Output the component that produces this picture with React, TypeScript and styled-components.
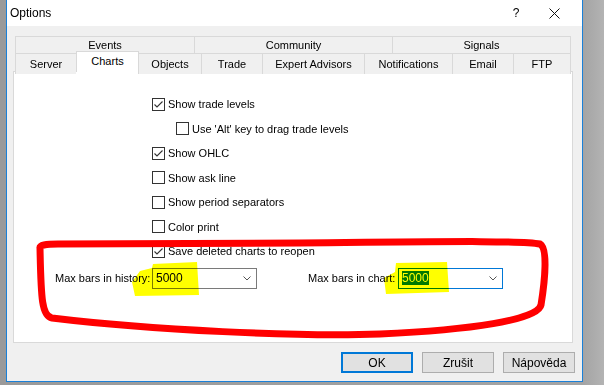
import React from 'react';
import styled, { createGlobalStyle } from 'styled-components';

const GlobalStyle = createGlobalStyle`
  html, body {
    margin: 0;
    padding: 0;
    background: #a6a6a6;
  }
  * {
    box-sizing: border-box;
  }
`;

const Screen = styled.div`
  position: relative;
  width: 604px;
  height: 385px;
  overflow: hidden;
  display: flex;
  padding-left: 6px;
  background: linear-gradient(90deg, #9a9a9a 0px, #9a9a9a 6px, #a4a4a4 583px, #b3b3b3 604px);
  font-family: 'Liberation Sans', Arial, sans-serif;
  font-size: 11px;
  color: #000;
`;

const Window = styled.div`
  width: 577px;
  height: 382px;
  border: 1px solid #1a80d8;
  border-top: none;
  background: #f0f0f0;
  display: flex;
  flex-direction: column;
`;

const TitleBar = styled.div`
  height: 26px;
  background: #fff;
  display: flex;
  align-items: center;
  padding-left: 3px;
  padding-right: 5px;
`;

const Title = styled.div`
  flex: 1;
  font-size: 12px;
`;

const TitleButton = styled.div<{ $w: number }>`
  width: ${(p) => p.$w}px;
  height: 26px;
  display: flex;
  align-items: center;
  justify-content: center;
  font-size: 12px;
`;

const Body = styled.div`
  flex: 1;
  display: flex;
  flex-direction: column;
  padding: 10px 9px 8px 6px;
`;

const Tabs = styled.div`
  margin: 0 2px;
`;

const TabRow = styled.div<{ $cols: string; $h: number }>`
  display: grid;
  grid-template-columns: ${(p) => p.$cols};
  height: ${(p) => p.$h}px;
`;

const Tab = styled.div<{ $active?: boolean; $last?: boolean }>`
  position: relative;
  display: flex;
  align-items: center;
  justify-content: center;
  border-top: 1px solid #d9d9d9;
  border-left: 1px solid #d9d9d9;
  border-right: ${(p) => (p.$last ? '1px solid #d9d9d9' : 'none')};
  background: ${(p) => (p.$active ? '#fff' : '#f0f0f0')};
  ${(p) =>
    p.$active
      ? `
    top: -2px;
    height: 21px;
    border-right: 1px solid #d9d9d9;
    margin-right: -1px;
    padding-bottom: 3px;
    z-index: 2;
  `
      : ''}
`;

const Panel = styled.div`
  height: 272px;
  border: 1px solid #d9d9d9;
  background: #fff;
  padding: 20px 0 0 138px;
  display: flex;
  flex-direction: column;
`;

const CheckRow = styled.div<{ $indent?: boolean }>`
  height: 24.5px;
  display: flex;
  align-items: center;
  gap: 3px;
  margin-left: ${(p) => (p.$indent ? 24 : 0)}px;
`;

const Box = styled.div`
  width: 13px;
  height: 13px;
  border: 1px solid #333;
  background: #fff;
  display: flex;
`;

const FieldsRow = styled.div`
  display: flex;
  align-items: center;
  margin: 4px 0 0 -97px;
  gap: 51px;
`;

const Field = styled.div`
  display: flex;
  align-items: center;
`;

const FieldLabel = styled.div<{ $w: number }>`
  width: ${(p) => p.$w}px;
  text-align: right;
  margin-right: 4px;
  white-space: nowrap;
`;

const Combo = styled.div<{ $focused?: boolean }>`
  width: 105px;
  height: 21px;
  border: 1px solid ${(p) => (p.$focused ? '#0078d7' : '#7a7a7a')};
  background: #fff;
  display: flex;
  align-items: center;
  padding: 0 5px 0 3px;
  font-size: 12px;
`;

const ComboValue = styled.span<{ $selected?: boolean }>`
  flex: 1;
  span {
    background: ${(p) => (p.$selected ? '#0078d7' : 'transparent')};
    color: ${(p) => (p.$selected ? '#fff' : '#000')};
  }
`;

const Buttons = styled.div`
  display: flex;
  justify-content: flex-end;
  gap: 9px;
  margin-top: 9px;
  margin-right: -2px;
`;

const Button = styled.div<{ $primary?: boolean }>`
  width: 72px;
  height: 21px;
  background: #e1e1e1;
  border: ${(p) => (p.$primary ? '2px solid #0078d7' : '1px solid #adadad')};
  display: flex;
  align-items: center;
  justify-content: center;
  font-size: 12px;
`;

const Overlay = styled.svg`
  position: absolute;
  left: 0;
  top: 0;
  pointer-events: none;
`;

const Highlights = styled(Overlay)`
  mix-blend-mode: multiply;
`;

const Check = ({ checked }: { checked?: boolean }) => (
  <Box>
    {checked && (
      <svg width="11" height="11" viewBox="0 0 11 11">
        <polyline points="1.5,5.5 4,8 9.5,2.5" fill="none" stroke="#333" strokeWidth="1.1" />
      </svg>
    )}
  </Box>
);

const Chevron = () => (
  <svg width="8" height="5" viewBox="0 0 8 5">
    <polyline points="0.5,0.5 4,4 7.5,0.5" fill="none" stroke="#555" strokeWidth="1" />
  </svg>
);

const checks = [
  { label: 'Show trade levels', checked: true },
  { label: "Use 'Alt' key to drag trade levels", indent: true },
  { label: 'Show OHLC', checked: true },
  { label: 'Show ask line' },
  { label: 'Show period separators' },
  { label: 'Color print' },
  { label: 'Save deleted charts to reopen', checked: true },
];

const topTabs = ['Events', 'Community', 'Signals'];
const bottomTabs = ['Server', 'Charts', 'Objects', 'Trade', 'Expert Advisors', 'Notifications', 'Email', 'FTP'];

export default function App() {
  return (
    <>
      <GlobalStyle />
      <Screen>
        <Window>
          <TitleBar>
            <Title>Options</Title>
            <TitleButton $w={30}>?</TitleButton>
            <TitleButton $w={46}>
              <svg width="11" height="11" viewBox="0 0 11 11">
                <path d="M0.5 0.5 L10.5 10.5 M10.5 0.5 L0.5 10.5" stroke="#111" strokeWidth="1" />
              </svg>
            </TitleButton>
          </TitleBar>
          <Body>
            <Tabs>
              <TabRow $cols="179px 198px 179px" $h={17}>
                {topTabs.map((t, i) => (
                  <Tab key={t} $last={i === topTabs.length - 1}>{t}</Tab>
                ))}
              </TabRow>
              <TabRow $cols="61px 62px 63px 61px 102px 88px 61px 58px" $h={18}>
                {bottomTabs.map((t, i) => (
                  <Tab key={t} $active={t === 'Charts'} $last={i === bottomTabs.length - 1}>{t}</Tab>
                ))}
              </TabRow>
            </Tabs>
            <Panel>
              {checks.map((c) => (
                <CheckRow key={c.label} $indent={c.indent}>
                  <Check checked={c.checked} />
                  {c.label}
                </CheckRow>
              ))}
              <FieldsRow>
                <Field>
                  <FieldLabel $w={93}>Max bars in history:</FieldLabel>
                  <Combo>
                    <ComboValue><span>5000</span></ComboValue>
                    <Chevron />
                  </Combo>
                </Field>
                <Field>
                  <FieldLabel $w={86}>Max bars in chart:</FieldLabel>
                  <Combo $focused>
                    <ComboValue $selected><span>5000</span></ComboValue>
                    <Chevron />
                  </Combo>
                </Field>
              </FieldsRow>
            </Panel>
            <Buttons>
              <Button $primary>OK</Button>
              <Button>Zrušit</Button>
              <Button>Nápověda</Button>
            </Buttons>
          </Body>
        </Window>
        <Highlights width="604" height="385">
          <path d="M153 264 L197 262 L199 295 L135 296 L132 282 L140 271 L152 268 Z" fill="#ffff00" />
          <path d="M396 263 L447 262 L449 292 L386 294 L384 278 L395 272 Z" fill="#ffff00" />
        </Highlights>
        <Overlay width="604" height="385">
          <path
            d="M40 248 Q39 244 58 244 L300 243 C420 242 520 240 540 244 C548 248 545 280 541 305 C538 320 470 330 380 334 C300 337 150 330 52 318 C42 316 41 300 40 248 Z"
            fill="none"
            stroke="#ff0000"
            strokeWidth="7"
            strokeLinejoin="round"
          />
        </Overlay>
      </Screen>
    </>
  );
}
